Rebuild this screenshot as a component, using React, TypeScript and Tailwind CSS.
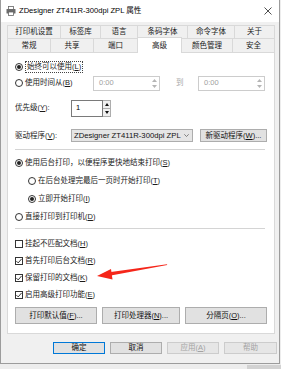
import React from 'react';

function K({ t, k, after = '' }: { t: string; k: string; after?: string }) {
  return (
    <span className="whitespace-nowrap">
      {t}(<span className="underline">{k}</span>){after}
    </span>
  );
}

function Radio({ checked }: { checked?: boolean }) {
  return (
    <span className="w-[8px] h-[8px] rounded-full border border-[#333] bg-white flex items-center justify-center shrink-0">
      {checked && <span className="w-[4px] h-[4px] rounded-full bg-[#222]" />}
    </span>
  );
}

function Check({ checked }: { checked?: boolean }) {
  return (
    <span className="w-[8px] h-[8px] border border-[#333] bg-white flex items-center justify-center shrink-0">
      {checked && (
        <svg width="6" height="6" viewBox="0 0 6 6">
          <path d="M0.4 3.1 L2.2 4.9 L5.6 0.9" stroke="#222" strokeWidth="0.9" fill="none" />
        </svg>
      )}
    </span>
  );
}

function Arrows({ color }: { color: string }) {
  return (
    <div className="flex flex-col items-center justify-center gap-[3px] w-[7px]">
      <svg width="5" height="3" viewBox="0 0 5 3">
        <path d="M0 3 L2.5 0 L5 3 Z" fill={color} />
      </svg>
      <svg width="5" height="3" viewBox="0 0 5 3">
        <path d="M0 0 L2.5 3 L5 0 Z" fill={color} />
      </svg>
    </div>
  );
}

function TimeSpin() {
  return (
    <div className="h-[15px] w-[67px] border border-[#cccccc] bg-white flex items-center justify-between pl-[5px] pr-[1px] text-[#a0a0a0]">
      <span>0:00</span>
      <Arrows color="#b5b5b5" />
    </div>
  );
}

const tabs1: [string, number][] = [
  ['打印机设置', 53],
  ['标签库', 40],
  ['语言', 37],
  ['条码字体', 50],
  ['命令字体', 47],
  ['关于', 41],
];
const tabs2: [string, number][] = [
  ['常规', 43],
  ['共享', 43],
  ['端口', 44],
  ['高级', 45],
  ['颜色管理', 50],
  ['安全', 43],
];

function Btn({ children, w, focus, disabled }: { children: React.ReactNode; w: string; focus?: boolean; disabled?: boolean }) {
  return (
    <div
      className={
        'flex items-center justify-center ' +
        w +
        (focus
          ? ' border border-[#0078d7] bg-[#e1e1e1] text-[#111]'
          : disabled
          ? ' border border-[#cccccc] bg-[#e6e6e6] text-[#a3a3a3]'
          : ' border border-[#adadad] bg-[#e1e1e1] text-[#111]')
      }
    >
      {children}
    </div>
  );
}

export default function App() {
  return (
    <div className="w-[281px] h-[369px] bg-[#ededed] relative overflow-hidden font-['Liberation_Sans','Noto_Sans_CJK_SC',sans-serif] text-[7.5px] leading-none text-[#1a1a1a]">
      <div className="w-[280px] h-[364px] bg-[#f0f0f0] border-l border-r border-b border-[#9c9c9c] flex flex-col">
        {/* title bar */}
        <div className="h-[22px] bg-white flex items-center pl-[5px] pr-[5px] shrink-0">
          <svg width="10" height="10" viewBox="0 0 10 10" className="shrink-0">
            <rect x="2.5" y="0.5" width="5" height="3" fill="#fff" stroke="#666" strokeWidth="0.8" />
            <rect x="0.5" y="3" width="9" height="4.5" rx="0.6" fill="#6b6b6b" />
            <rect x="2.5" y="6" width="5" height="3.5" fill="#fff" stroke="#666" strokeWidth="0.8" />
          </svg>
          <span className="ml-[3px] text-[7.6px] text-black">ZDesigner ZT411R-300dpi ZPL 属性</span>
          <svg width="8" height="8" viewBox="0 0 8 8" className="ml-auto mr-[2px]">
            <path d="M0.5 0.5 L7.5 7.5 M7.5 0.5 L0.5 7.5" stroke="#222" strokeWidth="0.8" />
          </svg>
        </div>

        {/* tabs */}
        <div className="ml-[6px] mt-[3px] flex flex-col w-[268px]">
          <div className="flex h-[13px]">
            {tabs1.map(([t, w], i) => (
              <div
                key={t}
                style={{ width: w }}
                className={
                  'h-full flex items-center justify-center border-t border-l border-[#d9d9d9] bg-[#f0f0f0]' +
                  (i === tabs1.length - 1 ? ' border-r' : '')
                }
              >
                {t}
              </div>
            ))}
          </div>
          <div className="flex h-[14px]">
            {tabs2.map(([t, w], i) =>
              t === '高级' ? (
                <div
                  key={t}
                  style={{ width: w }}
                  className="relative z-10 -mt-px h-[16px] flex items-center justify-center border-t border-l border-r border-[#d9d9d9] bg-white"
                >
                  {t}
                </div>
              ) : (
                <div
                  key={t}
                  style={{ width: w }}
                  className={
                    'h-full flex items-center justify-center border-t border-[#d9d9d9] bg-[#f0f0f0]' +
                    (i === tabs2.length - 1 ? ' border-r' : '') +
                    (i !== 4 ? ' border-l' : '')
                  }
                >
                  {t}
                </div>
              )
            )}
          </div>
        </div>

        {/* panel */}
        <div className="ml-[6px] w-[268px] h-[282px] bg-white border border-[#d9d9d9] flex flex-col pl-[7px] pt-[7px] shrink-0">
          <div className="h-[14px] flex items-center gap-[2px]">
            <Radio checked />
            <span className="border border-dotted border-[#444] px-[1px] py-[1px]">
              <K t="始终可以使用" k="L" />
            </span>
          </div>
          <div className="mt-[1px] h-[16px] flex items-center">
            <Radio />
            <span className="ml-[2px] w-[68px]">
              <K t="使用时间从" k="B" />
            </span>
            <TimeSpin />
            <span className="ml-[16px] w-[22px] text-[#a8a8a8]">到</span>
            <TimeSpin />
          </div>
          <div className="mt-[8px] h-[18px] flex items-center">
            <span className="w-[56px]">
              <K t="优先级" k="Y" after=":" />
            </span>
            <div className="h-[17px] w-[32px] border border-[#7a7a7a] bg-white flex items-center pl-[4px] text-black">1</div>
            <div className="h-[17px] w-[8px] border border-l-0 border-[#adadad] flex flex-col">
              <div className="flex-1 flex items-center justify-center bg-[#f0f0f0] border-b border-[#adadad]">
                <svg width="4" height="3" viewBox="0 0 4 3">
                  <path d="M0 3 L2 0 L4 3 Z" fill="#111" />
                </svg>
              </div>
              <div className="flex-1 flex items-center justify-center bg-[#f0f0f0]">
                <svg width="4" height="3" viewBox="0 0 4 3">
                  <path d="M0 0 L2 3 L4 0 Z" fill="#111" />
                </svg>
              </div>
            </div>
          </div>
          <div className="mt-[12px] h-[13px] flex items-center">
            <span className="w-[56px]">
              <K t="驱动程序" k="V" after=":" />
            </span>
            <div className="h-[13px] w-[122px] border border-[#adadad] bg-[#e5e5e5] flex items-center pl-[2px] pr-[3px] text-[#111] text-[7.7px]">
              <span>ZDesigner ZT411R-300dpi ZPL</span>
              <svg width="5" height="3" viewBox="0 0 5 3" className="ml-auto">
                <path d="M0.3 0.3 L2.5 2.5 L4.7 0.3" stroke="#555" strokeWidth="0.7" fill="none" />
              </svg>
            </div>
            <div className="ml-[7px] h-[13px] w-[67px] border border-[#adadad] bg-[#e1e1e1] flex items-center justify-center text-[#111]">
              <K t="新驱动程序" k="W" after="..." />
            </div>
          </div>
          <div className="mt-[7px] h-px w-[250px] bg-[#d4d4d4]" />
          <div className="mt-[4px] flex flex-col">
            <div className="h-[18px] flex items-center gap-[2px]">
              <Radio checked />
              <K t="使用后台打印，以便程序更快地结束打印" k="S" />
            </div>
            <div className="h-[18px] flex items-center gap-[2px] pl-[13px]">
              <Radio />
              <K t="在后台处理完最后一页时开始打印" k="T" />
            </div>
            <div className="h-[18px] flex items-center gap-[2px] pl-[13px]">
              <Radio checked />
              <K t="立即开始打印" k="I" />
            </div>
            <div className="h-[18px] flex items-center gap-[2px]">
              <Radio />
              <K t="直接打印到打印机" k="D" />
            </div>
          </div>
          <div className="mt-[2px] h-px w-[250px] bg-[#d4d4d4]" />
          <div className="mt-[6px] flex flex-col">
            <div className="h-[17px] flex items-center gap-[2px]">
              <Check />
              <K t="挂起不匹配文档" k="H" />
            </div>
            <div className="h-[17px] flex items-center gap-[2px]">
              <Check checked />
              <K t="首先打印后台文档" k="R" />
            </div>
            <div className="h-[17px] flex items-center gap-[2px]">
              <Check checked />
              <K t="保留打印的文档" k="K" />
            </div>
            <div className="h-[17px] flex items-center gap-[2px]">
              <Check checked />
              <K t="启用高级打印功能" k="E" />
            </div>
          </div>
          <div className="mt-[4px] h-[17px] flex gap-[5px]">
            <Btn w="w-[82px]">
              <K t="打印默认值" k="F" after="..." />
            </Btn>
            <Btn w="w-[78px]">
              <K t="打印处理器" k="N" after="..." />
            </Btn>
            <Btn w="w-[82px]">
              <K t="分隔页" k="O" after="..." />
            </Btn>
          </div>
        </div>

        {/* dialog buttons */}
        <div className="mt-[8px] h-[12px] flex gap-[5px] pl-[52px]">
          <Btn w="w-[52px]" focus>
            确定
          </Btn>
          <Btn w="w-[52px]">取消</Btn>
          <Btn w="w-[52px]" disabled>
            <K t="应用" k="A" />
          </Btn>
          <Btn w="w-[53px]" disabled>
            帮助
          </Btn>
        </div>
      </div>
      <div className="absolute left-[247px] top-[365px] w-[34px] h-[4px] bg-[#d2d2d2]" />

      {/* red annotation arrow */}
      <svg className="absolute left-0 top-0 pointer-events-none" width="281" height="369" viewBox="0 0 281 369">
        <path d="M167 264.3 L109 272.2 L109.6 275.8 L167.2 265.1 Z" fill="#f5261a" />
        <path d="M97 276 L111 269 L112.5 279.5 Z" fill="#f5261a" />
      </svg>
    </div>
  );
}
